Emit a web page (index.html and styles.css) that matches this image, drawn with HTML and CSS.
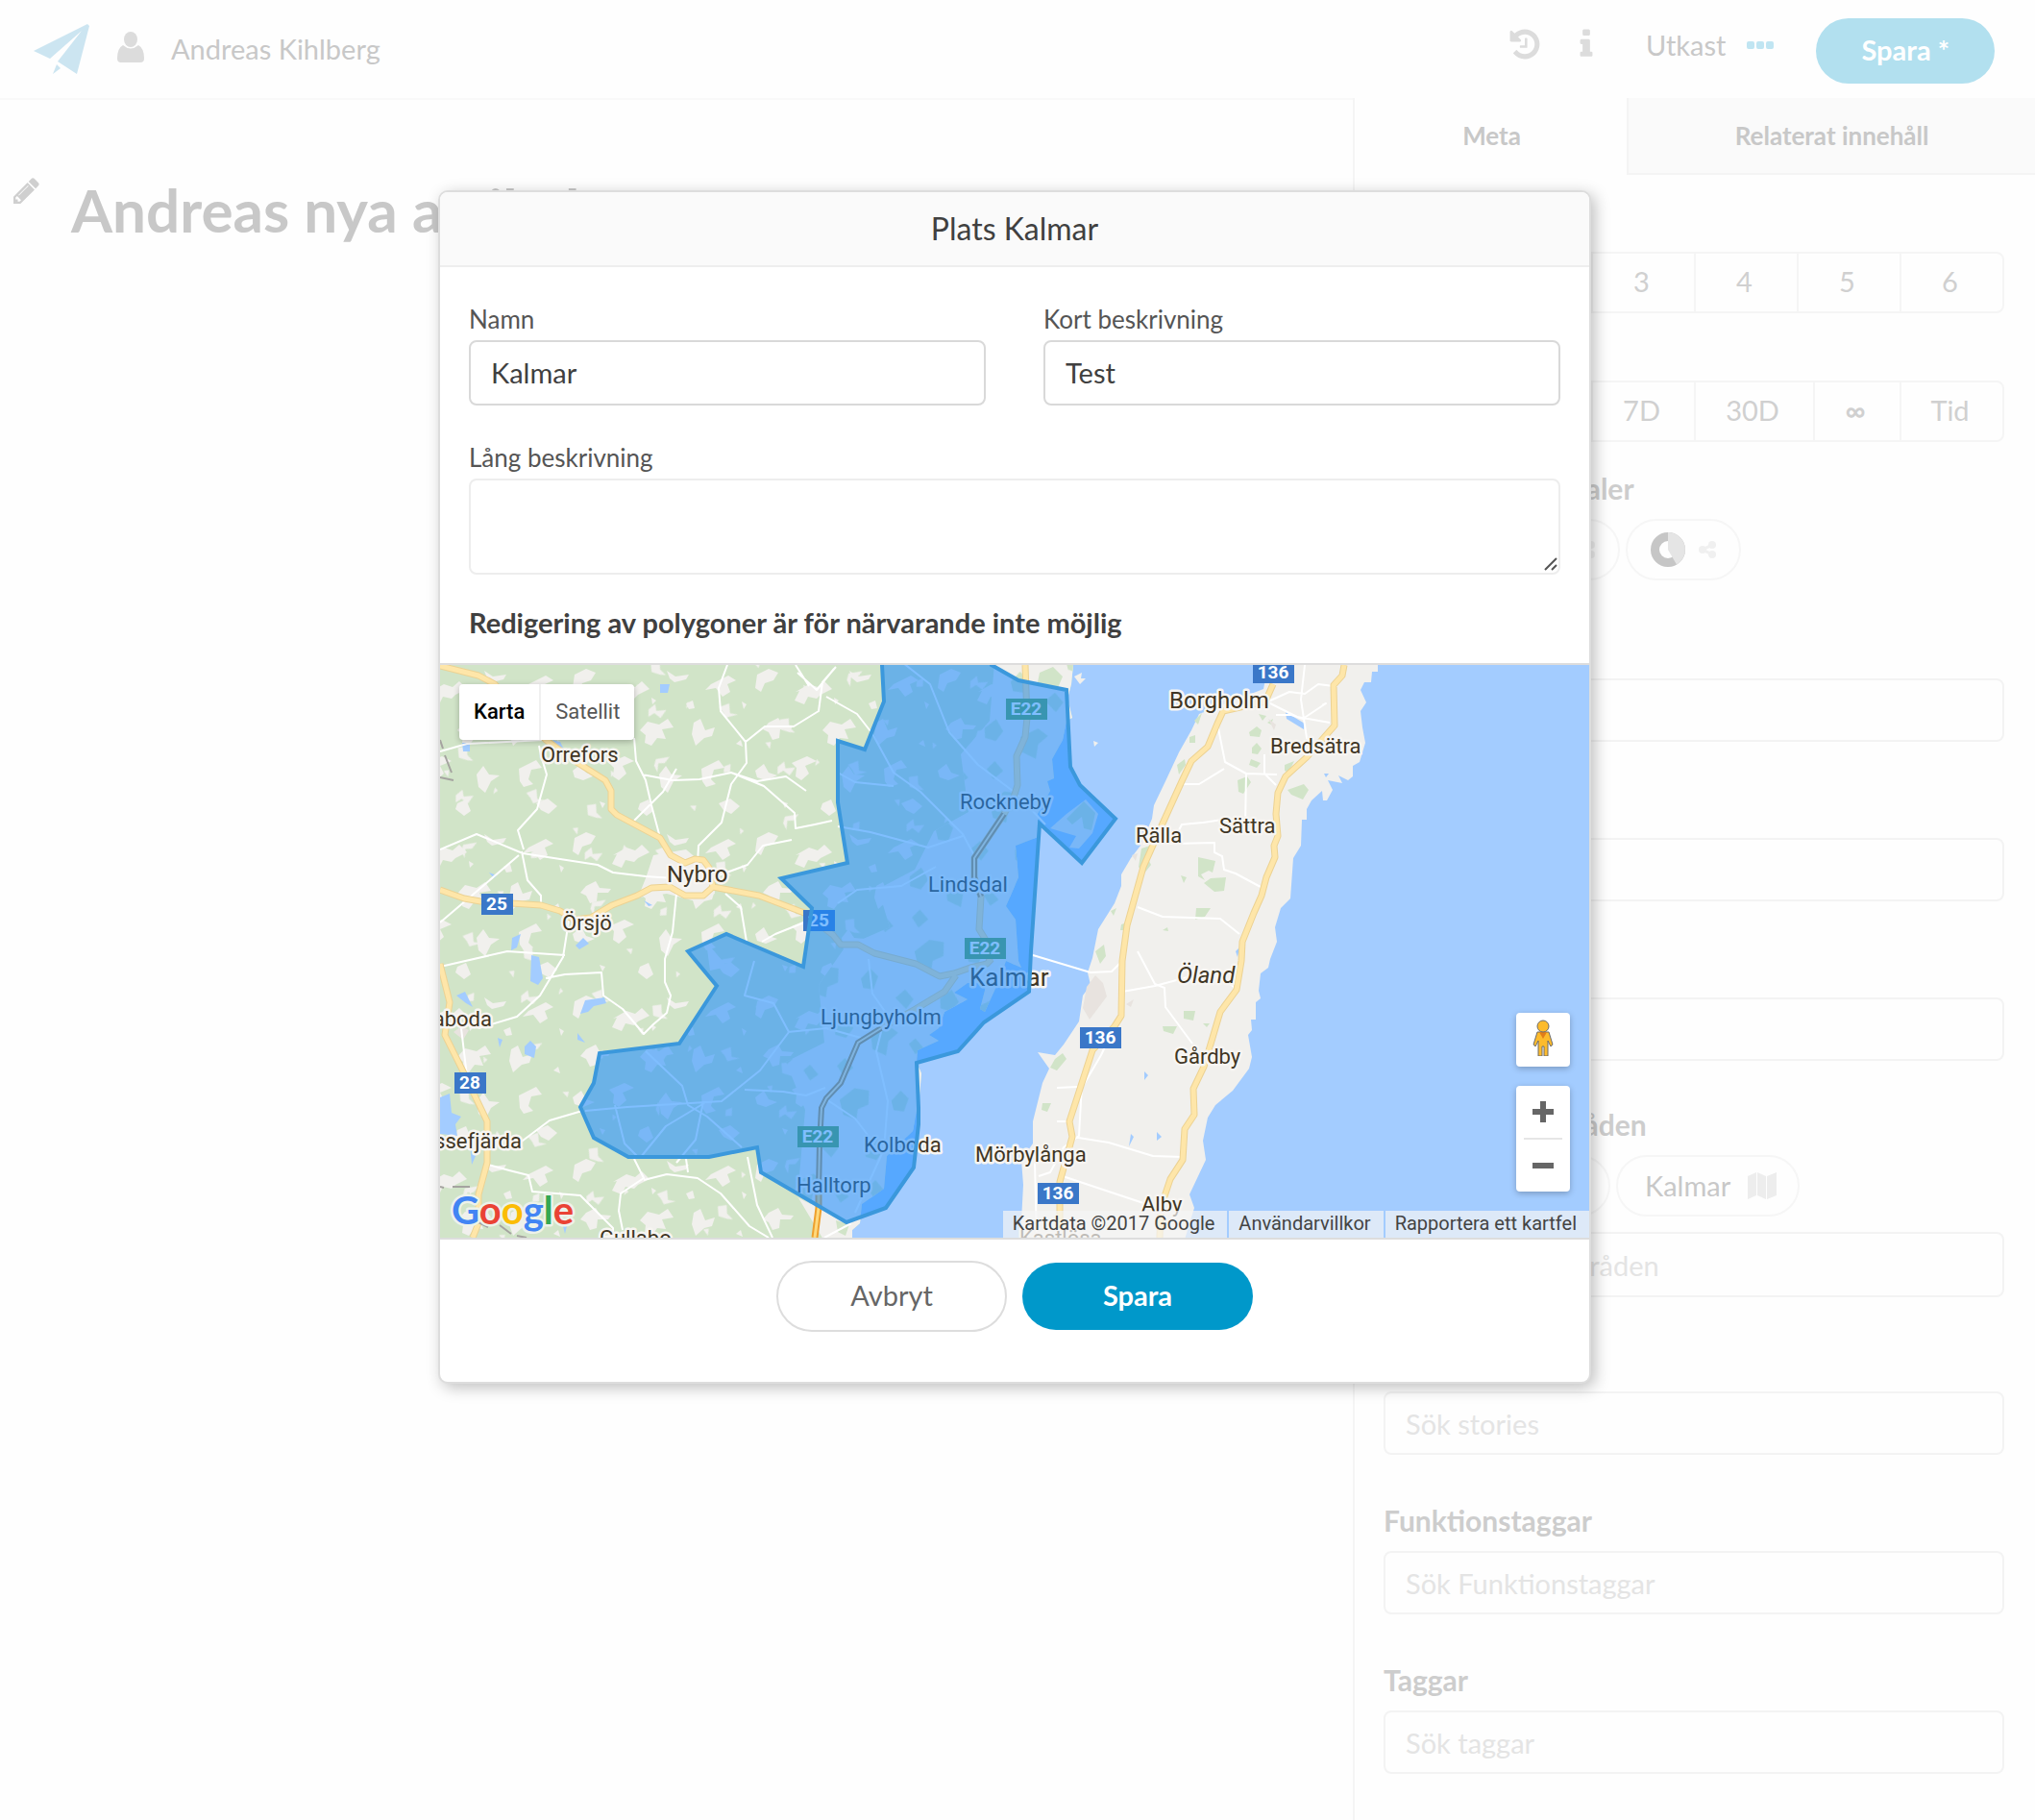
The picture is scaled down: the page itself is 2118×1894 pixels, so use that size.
FILE: index.html
```html
<!DOCTYPE html>
<html lang="sv">
<head>
<meta charset="utf-8">
<title>Plats Kalmar</title>
<link rel="stylesheet" href="styles.css">
</head>
<body>
<div class="app">
  <header class="topbar">
    <svg class="logo" viewBox="0 0 58 52" aria-hidden="true"><path d="M56 0 0 28l17 8L50 7 25 39l20 13L58 2zM24 42l-4 10 8-6z"/></svg>
    <svg class="icon-user" viewBox="0 0 28 32" aria-hidden="true"><ellipse cx="14" cy="8" rx="7" ry="8"/><path d="M6 14Q14 21 22 14Q28 17 28 28Q28 32 24 32H4Q0 32 0 28Q0 17 6 14z"/></svg>
    <span class="user-name">Andreas Kihlberg</span>
    <div class="topbar-actions">
      <button class="icon-button" aria-label="Historik"><svg class="icon" viewBox="0 0 1792 1792"><path d="M1664 896q0 156-61 298t-164 245-245 164-298 61q-172 0-327-72.500t-264-204.500q-7-10-6.500-22.500t8.500-20.500l137-138q10-9 25-9 16 2 23 12 73 95 179 147t225 52q104 0 198.500-40.500t163.500-109.500 109.500-163.500 40.500-198.500-40.500-198.500-109.500-163.500-163.500-109.500-198.500-40.500q-98 0-188 35.500t-160 101.500l137 138q31 30 14 69-17 40-59 40h-448q-26 0-45-19t-19-45v-448q0-42 40-59 39-17 69 14l130 129q107-101 244.500-156.500t284.500-55.500q156 0 298 61t245 164 164 245 61 298zm-640-288v448q0 14-9 23t-23 9h-320q-14 0-23-9t-9-23v-64q0-14 9-23t23-9h224v-352q0-14 9-23t23-9h64q14 0 23 9t9 23z"/></svg></button>
      <button class="icon-button" aria-label="Information"><svg class="icon" viewBox="0 0 1792 1792"><path d="M1216 1344v128q0 26-19 45t-45 19h-512q-26 0-45-19t-19-45v-128q0-26 19-45t45-19h64v-384h-64q-26 0-45-19t-19-45v-128q0-26 19-45t45-19h384q26 0 45 19t19 45v576h64q26 0 45 19t19 45zm-128-1152v192q0 26-19 45t-45 19h-256q-26 0-45-19t-19-45v-192q0-26 19-45t45-19h256q26 0 45 19t19 45z"/></svg></button>
      <button class="status">Utkast
        <svg class="icon-dots" viewBox="0 0 28 8" aria-hidden="true"><rect width="8" height="8" rx="2"/><rect x="10" width="8" height="8" rx="2"/><rect x="20" width="8" height="8" rx="2"/></svg>
      </button>
      <button class="save-faded">Spara *</button>
    </div>
  </header>

  <div class="workspace">
    <main class="editor">
      <svg class="icon-pencil" viewBox="128 128 1536 1536" aria-hidden="true"><path d="M491 1536l91-91-235-235-91 91v107h128v128h107zm523-928q0-22-22-22-10 0-17 7l-542 542q-7 7-7 17 0 22 22 22 10 0 17-7l542-542q7-7 7-17zm-54-192l416 416-832 832h-416v-416zm683 96q0 53-37 90l-166 166-416-416 166-165q36-38 90-38 53 0 91 38l235 234q37 39 37 91z"/></svg>
      <h1 class="headline">Andreas nya artikel</h1>
    </main>

    <aside class="sidebar">
      <div class="tabs">
        <button class="tab tab-active">Meta</button>
        <button class="tab">Relaterat innehåll</button>
      </div>
      <div class="meta">
        <section class="group">
          <h2 class="group-title">Nyhetsvärde</h2>
          <div class="segments"><button>1</button><button>2</button><button>3</button><button>4</button><button>5</button><button>6</button></div>
        </section>
        <section class="group group-near">
          <h2 class="group-title">Livslängd</h2>
          <div class="segments segments-time"><button>2H</button><button>1D</button><button>7D</button><button>30D</button><button class="segment-strong">∞</button><button>Tid</button></div>
        </section>
        <section class="group group-mid">
          <h2 class="group-title">Publiceringskanaler</h2>
          <div class="pills">
            <span class="pill pill-wide"><svg class="icon-share" viewBox="0 0 18 18" aria-hidden="true"><path d="M14 4 4 9l10 5"/><circle cx="14" cy="4" r="4"/><circle cx="4" cy="9" r="4"/><circle cx="14" cy="14" r="4"/></svg></span>
            <span class="pill">
              <svg class="icon-donut" viewBox="0 0 36 36" aria-hidden="true"><circle cx="18" cy="18" r="13.500"/><path d="M18 0A18 18 0 0 1 27 33.500L18 18z"/></svg>
              <svg class="icon-share" viewBox="0 0 18 18" aria-hidden="true"><path d="M14 4 4 9l10 5"/><circle cx="14" cy="4" r="4"/><circle cx="4" cy="9" r="4"/><circle cx="14" cy="14" r="4"/></svg>
            </span>
          </div>
        </section>
        <section class="group"><label class="group-title" for="authors">Författare</label><input class="search" id="authors" type="text"></section>
        <section class="group"><label class="group-title" for="people">Personer</label><input class="search" id="people" type="text"></section>
        <section class="group"><label class="group-title" for="orgs">Organisationer</label><input class="search" id="orgs" type="text"></section>
        <section class="group group-tight">
          <label class="group-title" for="places">Platser och områden</label>
          <div class="pills">
            <span class="pill pill-place">Småland</span>
            <span class="pill">Kalmar <svg class="icon-map" viewBox="0 0 30 28" aria-hidden="true"><path d="M0 4 9 0v24L0 28zM10 0l9 4v24l-9-4zM20 4l10-4v24l-10 4z"/></svg></span>
          </div>
          <input class="search search-spaced" id="places" type="text" placeholder="Sök platser/områden">
        </section>
        <section class="group group-tight"><label class="group-title" for="stories">Stories</label><input class="search" id="stories" type="text" placeholder="Sök stories"></section>
        <section class="group"><label class="group-title" for="functags">Funktionstaggar</label><input class="search" id="functags" type="text" placeholder="Sök Funktionstaggar"></section>
        <section class="group"><label class="group-title" for="tags">Taggar</label><input class="search" id="tags" type="text" placeholder="Sök taggar"></section>
      </div>
    </aside>
  </div>
</div>

<div class="overlay">
  <form class="modal" role="dialog" aria-labelledby="dialog-title">
    <h2 class="modal-title" id="dialog-title">Plats Kalmar</h2>
    <div class="modal-body">
      <div class="field-row">
        <div class="field"><label for="name">Namn</label><input id="name" type="text" value="Kalmar"></div>
        <div class="field"><label for="short">Kort beskrivning</label><input id="short" type="text" value="Test"></div>
      </div>
      <div class="field field-long">
        <label for="long">Lång beskrivning</label><textarea id="long"></textarea>
        <svg class="grip" viewBox="0 0 14 14" aria-hidden="true"><path d="M1 13 13 1M8 13l5-5"/></svg>
      </div>
      <p class="note">Redigering av polygoner är för närvarande inte möjlig</p>
    </div>

    <div class="map">
      <svg class="map-canvas" viewBox="458 692 1196 596" preserveAspectRatio="xMidYMid slice">
        <defs>
          <pattern id="fieldsA" width="190" height="170" patternUnits="userSpaceOnUse" patternTransform="translate(20 10)">
            <path d="M8 12l12-6 10 4-5 8-9 3-4 9-6-4zM48 30l14-8 9 3 7-6 8 8-12 6-4 4-9-2-4 8-10-4 5-10zM104 8l9 6 14-2-3 5-12 3-5-4zM150 22l18-9 8 5-9 4 3 8-8 5-7-9-11 2zM20 62l10-5 4 7 12 1-3 4-11 0-1 9-7 2-4-8-6-3zM76 70l8-9 12 3 9-6 6 9-12 2 4 10-9-1-6 8-7-3 1-8zM132 62l7-4 5 12 10-3-3 9-8 2-9 8-4-12zM6 112l9-7 5 9 9 3-12 5-9-3zM44 104l16-7 10 5-12 5 4 8-8 7-6-4 1-9zM96 116l7-9 6 9 11 1-9 6-6 12-7-6zM140 110l18-9 6 8-11 2-3 10 5 5-10 3-4-6zM76 146l9-4 5 12-7 5-9-7zM158 146l12-5 10 8-9 8-8-4zM88 36l5 3-4 4zM124 42l7-3 2 8-6 1zM182 40l5 3-3 5zM34 144l6 2-3 5zM176 84l5-4 2 7z"/>
          </pattern>
          <pattern id="fieldsB" width="147" height="163" patternUnits="userSpaceOnUse" patternTransform="rotate(24) translate(5 8)">
            <path d="M12 20l8-5 4 8 8 3-6 2-9 1zM96 34l8-8 5 9 8-2-10 8-5-4zM30 66l4-8 4 6 9-5-2 10-8-2-4 6zM126 88l5-5 3 8-6 3zM58 110l12-8-2 8-6 3 3 9-6-5zM64 42l4 2-3 5zM8 48l5-3 2 7zM20 140l5 1-2 5zM110 140l6-3 1 6z"/>
          </pattern>
          <pattern id="woods" width="113" height="131" patternUnits="userSpaceOnUse" patternTransform="rotate(-14)">
            <path d="M6 12l18-8 14 6-4 14-12 2-4 10-12-8zM58 26l12-8 6 10-8 12-10-4zM88 54l12-6 6 12-10 8zM20 66l14-6 4 14-10 8-10-6zM54 84l20-4 8 10-12 6-6 14-12-10zM12 108l10-6 6 12-12 6zM90 104l8-4 6 12-10 4z"/>
          </pattern>
          <clipPath id="mainland"><path d="M450 680H1117V692L1115 712 1111 727 1116 747 1110 750 1106 770 1095 790 1097 810 1090 813 1093 823 1080 847 1083 870 1057 880 1060 913 1047 943 1057 957 1060 1000 1063 1007 1047 1000 1040 1020 1025 1053 1020 1050 1027 1023 1007 1023 993 1033 1007 1040 983 1053 977 1070 967 1077 977 1083 955 1093 954 1106 959 1117 957 1140 950 1177 923 1203 920 1237 897 1253 895 1273 887 1280V1300H450z"/></clipPath>
        </defs>

        <rect class="water" x="458" y="692" width="1196" height="596"/>
        <g clip-path="url(#mainland)">
          <rect class="forest" x="450" y="680" width="700" height="620"/>
          <rect x="450" y="680" width="700" height="620" fill="url(#fieldsA)"/>
          <rect x="450" y="680" width="700" height="620" fill="url(#fieldsB)"/>
          <path class="land" d="M1120 690h-85l-5 60-30 35 8 60-36 20-20 40-38 20 12 40-46 20-28 40 6 60-40 20 20 50-8 90 30 50h300zM735 980l22 26-18 4zM680 890l34-6 26 22 4 24-20 8-30-8-30 4 8-20z"/>
          <path d="M1120 690h-85l-5 60-30 35 8 60-36 20-20 40-38 20 12 40-46 20-28 40 6 60-40 20 20 50-8 90 30 50h300z" fill="url(#woods)"/>
          <path class="lake" d="M687 712h10l-2 9h-8zM481 773h8v9h-7zM575 770l8 2 4 8-6-4zM533 976l9-4-4 14-6 3zM599 984l8-8 6 6-10 6zM553 994l8 2 4 22-5 7-8-4zM604 1055l5-14 20-3 2 6-13 3-6 6zM475 1036l9-4 8 16-7-4zM601 1075l8 10-8-3zM518 1080l5 2-3 8zM546 1089l6-6 6 6-2 12-10-4zM458 1142l10-4 2 20 10 4-6 8 2 12-18-2zM489 1190l6-8 4 12-8 18zM586 1276l4 0-2 8zM509 908l8 3-3 3zM670 937l9 5-4 1z"/>
        </g>
        <path class="land" d="M1130 832l13 15-6 20-14 16-10-1 7-12-27-8 17-15zM1118 704l8-4-1 6 5 0-6 6zM1138 771l5 2-4 4z"/>
        <path class="wood" d="M1128 834l12 12-4 18-8-2-2-12-10 8-6-6z"/>
        <path class="land" d="M1320 692 1315 717 1248 743 1240 760 1227 783 1213 813 1201 838 1199 852 1187 880 1177 893 1167 910 1167 922 1160 940 1143 967 1137 997 1132 1012 1135 1025 1127 1036 1123 1063 1107 1087 1098 1098 1080 1095 1092 1112 1085 1127 1075 1167V1190L1063 1207 1065 1233 1062 1290H1233L1243 1257 1238 1243 1255 1207 1252 1187 1257 1163 1265 1150 1283 1135 1300 1112 1303 1100 1299 1077 1303 1072 1302 1061H1307V1043L1312 1039 1310 1031 1312 1013 1320 1007 1322 998 1329 980 1327 965 1333 945 1343 935 1346 893 1354 880 1355 853H1360V842L1365 833 1376 823 1377 833H1381L1387 822 1382 812 1397 815 1393 807 1403 812 1408 808V797L1415 793 1421 773 1418 757 1416 740 1422 731 1416 718 1420 710H1427L1428 699H1434V688H1320z"/>
        <path class="lake" d="M1338 741l20 12-1 6-18-11zM1191 1115l4 4-4 5zM1177 1180l3 3-5 10zM1204 1178l5 5-5 4zM1286 990l4-4-2 10zM1378 805l5 0-3 4z"/>
        <path class="wood" d="M1340 822l17-6 5 6-6 10-12-5zM1288 812l10-4 4 6-8 12-5-2zM1303 778l5-5 5 6-4 6-6-1zM1300 762l8-6 5 4-2 7-10-1zM1302 790l10 4-4 5-8-3zM1310 743l8 2-4 5zM1319 752l6-4-2 6zM1337 796l10-4-6 12-4-2zM1225 796l8-6 1 6-7 10zM1238 767l6-2 0 8-6 0zM1243 750l8-8-4 12zM1247 892l18 4-3 12-4-2-8 4 4 6-7-4zM1260 914l16-1-2 14-10 1-11-9zM1188 883l9-3-3 12 4 8-8 10-5-8zM1245 945l15 0-6 9-10 3zM1229 911l6 2-3 6zM1232 1052l12 0-2 10-10-2zM1210 1068l15 0-4 8-10-3zM1252 1065l7 0-3 4zM1098 1102l8-6 4 6-10 12-7-3zM1085 1148l9 0-4 9-6-2zM1140 990l9-7 2 12-6 8zM1167 962l6-2 1 8-8 0zM1156 948l6-3-3 8zM1210 968l5-3 1 4zM870 1270l14 4-4 12-8-4zM1082 700l14-6 10 10-6 14-20-8z"/>
        <path class="town" d="M1140 1015l8 8 4 14-18 24-7-12 4-22zM1320 748l8 6-2 6zM1172 1045l8-5-3 8zM1178 890l6-2-2 8zM472 1074l8-6 8 4-6 10z"/>

        <g class="road-white">
          <path d="M757 692l-9 24 2 24 26 32 1 22-16 22-10 40-24 24-1 18M668 806l32 6 28-1 33-7 27 9 30-5 21 15M776 772l20-16h30l26-16 4-30 14-16M761 804l34 14 32 28 1 16 20-4 18-4M458 884l38-16 48 20 78 12 16 8 34 4 30 2M545 884l-6-20 20-22 10-36-6-20-2-10M543 886l6 30 14 16 0 10M458 960l40-34 42-36M660 768l2 24 10 20 6 26 8 30M660 854l20-20 10-10 14-24M592 958l-6 38-24 40-24 22-40 12M458 1006l70-16 60 4M704 930l-4 40-8 28 0 24 6 14-4 18-14 12-10 10-22-26-20-14-2-24-38 2-20 4M486 1120l-6-50 20-10M606 1156l-34 10-32 24M508 1212l22 6 20 5 4 17 50 4 34 34 0 10M660 1206l10 20-24 16-2 18 4 20M670 1228l24-6 32 4 24 16 30 34 20 12M714 1206l2 14M778 1204l10 50 16 34M886 1273l-28 15M860 725l32 18 14 18M830 700l20 18 18-22M842 714l-14-22M458 782l28-8 80-4M755 930l16 14 6 36M837 960l-30 12-14 8M740 914l38-14 16-20 30-6"/>
          <path d="M906 760l24 44 28 20 44 44 14 26M930 818l-40-4-18-10M872 860l34 6 60 16 36-12M872 940l20-14 46-4 36-20M940 690l28 22 20 50 30 34 40 30 30 32M785 1000l-10 36 30 8 16 30-30 40-40 32-98 6-44 4M820 1074l40-4 36 10M672 1094l38 36 6 20 20 12 36 32M732 1146l-8 40-20 24M640 1150l10 40 14 14M733 1148l-40 24-26 32M775 1134l40 2 24 4 20-8M904 998l4 36 14 20-10 40 12 52-4 50-30 66M860 1144l30 20 20 26"/>
          <path d="M1075 994l60 18 22-1 10-10M1168 1032l34-6 60-16 26 20M1184 990l18 34 10 4 1 20 28 38M1267 753l8 40 22 12 32 1M1328 744l16 0 12 4 24-16-4 2M1320 730l22-10 16 2 14-10 16 2M1318 730l32 16 34 6M1358 692l-4 36 6 40 8 10M1230 816l18 0 26-16M1190 878h30l10-20 22-2 26-4M1220 878l44-1 0 10 8 4 2 14 12 4 26 14M1184 944l26 10 60 2 20 16M1297 805l-1 56M1316 785l0 20 12 12M1100 1132l22-1M1160 1068l-14 30-20 34-1 14-2 36-16 12-14 26-12 4M1100 1167l10 0M1116 1183l38 6 46 14 31 1M1106 1224l84 28M1077 1210l2 78"/>
        </g>
        <g class="road-major">
          <path d="M458 693l40 10 17 9 53 58 32 23 30 19 6 11v19l6 6 45 24 11 18 15 8 10-4 9 1 6 8 4 20"/>
          <path d="M458 926l25 9 17 3 63 4 20 6 14 9 18-2 22-13 26-10 15-8 19-1 16 9h19l10-9 48 9 47 18 30 23 8 10h18l17 9 43 11 25 13 15-3 17-6 17-4 5-5"/>
          <path d="M458 1003l10 40-5 34 20 40 24 50v43l-9 33v30l-6 15"/>
          <path d="M1325 712l-8 18-44 10-6 13-10 24-17 15-10 21-20 44-20 45-17 61-5 37-1 57-7 11-23 25-24 74 3 16-13 47v58"/>
          <path d="M1399 692l-2 11-9 10 1 42-29 33-22 20-8 17-2 22 2 23-4 10 1 12-9 21-5 19-8 18-12 30-1 20-5 30-17 23-8 27-9 30-11 23 1 27-10 15-2 32-13 20-10 30-1 31"/>
          <path d="M1067 692l2 55-2 20-9 20 1 30-4 13-10 17-31 46v20l7 20-2 34 8 13 3 20M995 1015l-12 17-30 18-36 20"/>
        </g>
        <path class="road-fill" d="M458 693l40 10 17 9 53 58 32 23 30 19 6 11v19l6 6 45 24 11 18 15 8 10-4 9 1 6 8 4 20M458 926l25 9 17 3 63 4 20 6 14 9 18-2 22-13 26-10 15-8 19-1 16 9h19l10-9 48 9 47 18 30 23 8 10h18l17 9 43 11 25 13 15-3 17-6 17-4 5-5M458 1003l10 40-5 34 20 40 24 50v43l-9 33v30l-6 15M1325 712l-8 18-44 10-6 13-10 24-17 15-10 21-20 44-20 45-17 61-5 37-1 57-7 11-23 25-24 74 3 16-13 47v58M1399 692l-2 11-9 10 1 42-29 33-22 20-8 17-2 22 2 23-4 10 1 12-9 21-5 19-8 18-12 30-1 20-5 30-17 23-8 27-9 30-11 23 1 27-10 15-2 32-13 20-10 30-1 31M1067 692l2 55-2 20-9 20 1 30-4 13-10 17-31 46v20l7 20-2 34 8 13 3 20M995 1015l-12 17-30 18-36 20"/>
        <path class="motorway" d="M1045 847l-31 46v20l7 20M917 1070l-24 15-18 42-15 16-5 10-2 37-1 50"/>
        <path class="motorway-fill" d="M1045 847l-31 46v20l7 20M917 1070l-24 15-18 42-15 16-5 10-2 37-1 50"/>
        <path class="motorway-south" d="M852 1240v17l-4 31"/>
        <path class="motorway-south-fill" d="M852 1240v17l-4 31"/>
        <path class="rail" d="M458 770l3 9M463 786l7 18M458 809l14 3M458 1235l4 1M471 1235h18M498 1272l10 5M520 1275l12 9M538 1286l10 2"/>

        <g class="place">
          <text x="563" y="793">Orrefors</text><text class="place-town" x="694" y="918">Nybro</text><text x="585" y="968">Örsjö</text>
          <text x="512" y="1068" text-anchor="end">Emmaboda</text><text x="543" y="1195" text-anchor="end">Vissefjärda</text>
          <text x="624" y="1296">Gullabo</text><text x="829" y="1241">Halltorp</text><text x="999" y="842">Rockneby</text>
          <text x="966" y="928">Lindsdal</text><text class="place-city" x="1009" y="1026">Kalmar</text><text x="854" y="1066">Ljungbyholm</text>
          <text x="899" y="1199">Kolboda</text><text x="1015" y="1209">Mörbylånga</text><text class="place-town" x="1217" y="737">Borgholm</text>
          <text x="1322" y="784">Bredsätra</text><text x="1269" y="867">Sättra</text><text x="1182" y="877">Rälla</text>
          <text class="place-island" x="1225" y="1023">Öland</text><text x="1222" y="1107">Gårdby</text><text x="1188" y="1261">Alby</text><text x="1061" y="1296">Kastlösa</text>
        </g>
        <g class="shield">
          <rect x="501" y="930" width="33" height="22"/><rect x="836" y="947" width="33" height="22"/><rect x="473" y="1116" width="33" height="22"/>
          <rect x="1124" y="1069" width="43" height="22"/><rect x="1080" y="1231" width="43" height="22"/><rect x="1304" y="689" width="43" height="22"/>
          <g class="shield-e"><rect x="1047" y="727" width="43" height="22"/><rect x="1004" y="976" width="43" height="22"/><rect x="830" y="1172" width="43" height="22"/></g>
          <text x="517" y="947">25</text><text x="852" y="964">25</text><text x="489" y="1133">28</text><text x="1145" y="1086">136</text><text x="1101" y="1248">136</text><text x="1325" y="706">136</text>
          <text x="1068" y="744">E22</text><text x="1025" y="993">E22</text><text x="851" y="1189">E22</text>
        </g>
        <path class="area" d="M918 684v8l2 38-20 50-28-9v64l10 63-69 16 32 31-9 61-80-34-40 18 30 36-39 60-83 10-6 31-14 25 14 32 36 20h84l50-10 4 26 89 52 41-15 29-42 5-45v-17l-2-47 43-12 27-30 47-32 2-42 9-133 44 41 35-46-37-35-10-19-4-80-50-10-28-16v-8z"/>
        <text class="brand" x="470" y="1274"><tspan fill="#4285f4">G</tspan><tspan fill="#ea4335">o</tspan><tspan fill="#fbbc05">o</tspan><tspan fill="#4285f4">g</tspan><tspan fill="#34a853">l</tspan><tspan fill="#ea4335">e</tspan></text>
      </svg>
      <div class="map-type"><button type="button" class="map-type-on">Karta</button><button type="button">Satellit</button></div>
      <div class="map-controls">
        <button type="button" class="map-button" aria-label="Street View"><svg class="pegman" viewBox="0 0 22 38"><path class="pegman-body" d="M5 13h12l4 13-2 2-3-6v16h-4v-10h-2v10H6V22l-3 6-2-2z"/><path class="pegman-neck" d="M7 13h8l-4 7z"/><circle class="pegman-body" cx="11" cy="7" r="6"/></svg></button>
        <div class="zoom">
          <button type="button" aria-label="Zooma in"><svg viewBox="0 0 22 22"><path d="M8 0h6v8h8v6h-8v8H8v-8H0V8h8z"/></svg></button>
          <button type="button" aria-label="Zooma ut"><svg viewBox="0 0 22 22"><path d="M0 8h22v6H0z"/></svg></button>
        </div>
      </div>
      <div class="attribution"><span>Kartdata ©2017 Google</span><a href="#">Användarvillkor</a><a href="#">Rapportera ett kartfel</a></div>
    </div>

    <div class="modal-actions">
      <button type="button" class="cancel">Avbryt</button>
      <button type="submit" class="submit">Spara</button>
    </div>
  </form>
</div>
</body>
</html>
```
FILE: styles.css
```css
* { box-sizing: border-box; }

body {
  margin: 0;
  background: #fefefe;
  color: #c8c8c8;
  font: 29px/34px Lato, "Open Sans", sans-serif;
  position: relative;
}

button, input, textarea { font: inherit; color: inherit; }
button { border: 0; background: none; padding: 0; cursor: pointer; }
h1, h2, p { margin: 0; }
svg { display: block; fill: currentColor; }

.app { min-height: 100vh; display: flex; flex-direction: column; }

/* Top bar */
.topbar { height: 102px; display: flex; align-items: center; padding: 0 42px 0 35px; }
.logo { width: 58px; height: 52px; color: #cce5f1; }
.icon-user { width: 28px; height: 32px; margin: 0 28px 4px 29px; color: #dcdcdc; }
.topbar-actions { margin-left: auto; display: flex; align-items: flex-start; }
.icon { width: 36px; height: 36px; color: #dcdcdc; }
.icon-button { margin: 13px 28px 0 0; }
.status { display: flex; align-items: center; gap: 22px; margin: 15px 44px 0 16px; }
.icon-dots { width: 28px; color: #c0e5f2; }
.save-faded {
  height: 68px; padding: 0 47px 2px; margin-top: 4px; border-radius: 34px;
  background: #b2e0ef; color: #fff; font-weight: 700;
}

/* Workspace */
.workspace { flex: 1; display: grid; grid-template-columns: 1fr 710px; }
.editor { border-top: 2px solid #f9f9f9; padding: 77px 14px; display: flex; align-items: flex-start; gap: 33px; }
.icon-pencil { width: 27px; height: 27px; color: #cfcfcf; margin-top: 4px; }
.headline { font-size: 62px; line-height: 74px; }

.sidebar { border-left: 2px solid #f5f5f5; }
.tabs { display: grid; grid-template-columns: 2fr 3fr; }
.tab {
  height: 80px; font-size: 26px; font-weight: 700;
  background: #fafafa; border-left: 2px solid #f4f4f4; border-bottom: 2px solid #f4f4f4;
}
.tab-active { background: none; border-color: transparent; }
.meta { padding: 30px 32px 48px 30px; display: flex; flex-direction: column; gap: 50px; }
.group { display: flex; flex-direction: column; }
.group-near { margin-top: -30px; }
.group-mid { margin-top: -20px; }
.group-tight { margin-top: -2px; }
.group-title { font-size: 30px; line-height: 36px; font-weight: 700; margin-bottom: 14px; color: #cdcdcd; }

.segments { display: grid; grid-template-columns: repeat(6, 1fr); height: 64px; border: 2px solid #f5f5f5; border-radius: 8px; color: #d0d0d0; }
.segments-time { grid-template-columns: 107px 107px 107px 124px 90px 1fr; }
.segments button + button { border-left: 2px solid #f5f5f5; }
.segments button { padding: 0 4px 2px 0; }
.segments .segment-strong { font-weight: 700; }

.pills { display: flex; align-items: flex-start; gap: 6px; min-height: 66px; }
.pill { height: 64px; min-width: 120px; padding: 0 24px; border: 2px solid #f6f6f6; border-radius: 32px; display: flex; align-items: center; gap: 14px; }
.pill-wide { width: 246px; justify-content: flex-end; }
.pill-place { width: 236px; }
.icon-donut { width: 36px; height: 36px; }
.icon-donut circle { fill: none; stroke: #c6c6c6; stroke-width: 9; }
.icon-donut path { fill: #e5e5e5; }
.icon-share { width: 18px; height: 18px; color: #f0f0f0; }
.icon-share path { fill: none; stroke: currentColor; stroke-width: 3; }
.icon-map { width: 30px; height: 28px; color: #ededed; }
.pill-place + .pill { padding: 0 22px 0 28px; gap: 18px; }

.search { height: 66px; width: 100%; border: 2px solid #f3f3f3; border-radius: 8px; padding: 0 21px; background: transparent; }
.search::placeholder { color: #e4e4e4; opacity: 1; }
.search-spaced { height: 68px; margin-top: 14px; }

/* Dialog */
.overlay { position: absolute; inset: 0; display: flex; justify-content: center; align-items: flex-start; padding: 198px 6px 0 0; }
.modal {
  width: 1200px; background: #fff; color: #404040;
  border: 2px solid #ddd; border-radius: 10px; overflow: hidden;
  box-shadow: 4px 4px 16px rgba(0, 0, 0, .25);
}
.modal-title { font-size: 32px; line-height: 76px; font-weight: 400; text-align: center; background: #fafafa; border-bottom: 2px solid #eee; }
.modal-body { padding: 38px 30px 25px; display: flex; flex-direction: column; }
.field-row { display: grid; grid-template-columns: 1fr 1fr; gap: 60px; margin-bottom: 38px; }
.field { display: flex; flex-direction: column; gap: 6px; }
.field label { font-size: 26px; line-height: 32px; color: #555; }
.field input { height: 68px; width: 100%; padding: 0 21px 2px; border: 2px solid #d9d9d9; border-radius: 8px; background: #fff; }
.field textarea { height: 100px; padding: 14px 21px; border: 2px solid #ededed; border-radius: 8px; background: #fff; resize: none; }
.field-long { position: relative; }
.grip { position: absolute; right: 3px; bottom: 4px; width: 14px; height: 14px; fill: none; stroke: #555; stroke-width: 2; }
.note { margin-top: 33px; font-weight: 700; }

.map { position: relative; height: 600px; border: solid #ddd; border-width: 2px 0; overflow: hidden; font-family: Roboto, sans-serif; }
.map-canvas { width: 100%; height: 100%; }
.water, .lake { fill: #a3ccff; }
.forest, .wood { fill: #d1e4c8; }
#woods path { fill: #d1e4c8; }
#fieldsA path, #fieldsB path, .land { fill: #f1f0ed; }
.town { fill: #e8e3df; }
.road-white { fill: none; stroke: #fff; stroke-width: 2; stroke-linejoin: round; }
.road-major { fill: none; stroke: #ecd293; stroke-width: 7; stroke-linejoin: round; }
.road-fill { fill: none; stroke: #fee6a9; stroke-width: 5; stroke-linejoin: round; }
.motorway { fill: none; stroke: #b98f4e; stroke-width: 6; }
.motorway-fill { fill: none; stroke: #ffe9b8; stroke-width: 2; }
.motorway-south { fill: none; stroke: #eea02e; stroke-width: 7; }
.motorway-south-fill { fill: none; stroke: #ffd97c; stroke-width: 3; }
.rail { fill: none; stroke: #a5a3a0; stroke-width: 2; }
.place { font-size: 22px; fill: #3f3524; paint-order: stroke; stroke: #f7f5f2; stroke-width: 5px; stroke-linejoin: round; }
.place-town { font-size: 24px; }
.place-city { font-size: 26px; }
.place-island { font-size: 24px; font-style: italic; }
.shield { fill: #3a77c8; font-size: 19px; font-weight: 700; text-anchor: middle; }
.shield-e { fill: #5ea34e; }
.shield text { fill: #fff; }
.area { fill: #1b8bff; fill-opacity: .56; stroke: #3b98dc; stroke-width: 4; }
.brand { font: 700 40px Lato, sans-serif; paint-order: stroke; stroke: #edf2ea; stroke-width: 5px; stroke-linejoin: round; }

.map-type { position: absolute; left: 20px; top: 20px; display: flex; height: 58px; background: #fff; border-radius: 4px; box-shadow: 0 2px 6px rgba(0, 0, 0, .25); font-size: 22px; color: #565656; }
.map-type button { padding: 0 15px; }
.map-type button + button { border-left: 2px solid #f0f0f0; }
.map-type .map-type-on { color: #000; font-weight: 500; }
.map-controls { position: absolute; right: 20px; bottom: 48px; width: 56px; display: flex; flex-direction: column; gap: 20px; color: #666; }
.map-button, .zoom { background: #fff; border-radius: 4px; box-shadow: 0 2px 6px rgba(0, 0, 0, .25); }
.map-button { height: 56px; display: grid; place-items: center; }
.pegman { width: 22px; height: 38px; margin-bottom: 4px; }
.pegman-body { fill: #fdbb2c; stroke: #6b6b6b; stroke-width: 1; }
.pegman-neck { fill: #e27d18; }
.zoom { padding: 0 8px; }
.zoom button { width: 40px; height: 54px; display: grid; place-items: center; }
.zoom button + button { height: 56px; border-top: 2px solid #e6e6e6; }
.zoom svg { width: 22px; height: 22px; }
.attribution { position: absolute; right: 0; bottom: 0; display: flex; gap: 2px; font-size: 20px; line-height: 26px; color: #444; }
.attribution > * { padding: 0 13px 2px 10px; background: rgba(245, 245, 245, .7); color: inherit; text-decoration: none; }

.modal-actions { display: flex; justify-content: center; align-items: center; gap: 16px; padding: 22px 0 52px; }
.cancel, .submit { width: 240px; height: 70px; border-radius: 37px; padding-bottom: 2px; }
.cancel { height: 74px; border: 2px solid #ddd; color: #666; }
.submit { background: #0098ca; color: #fff; font-weight: 700; }
```
